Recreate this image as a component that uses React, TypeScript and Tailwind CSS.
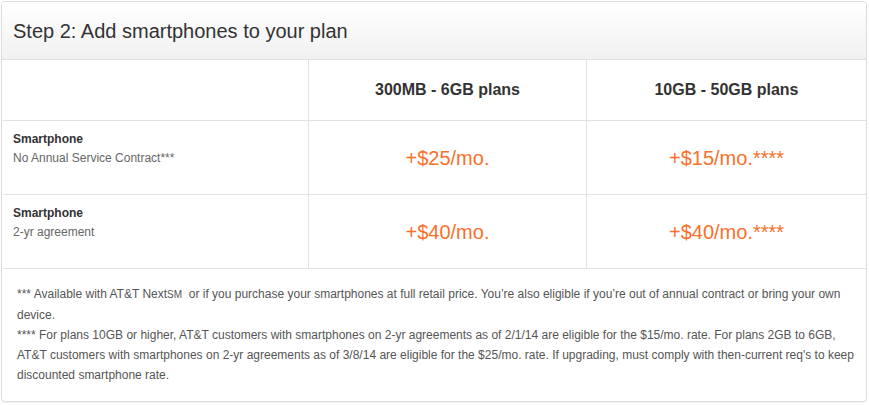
const rows = [
  { title: "Smartphone", sub: "No Annual Service Contract***", a: "+$25/mo.", b: "+$15/mo.****" },
  { title: "Smartphone", sub: "2-yr agreement", a: "+$40/mo.", b: "+$40/mo.****" },
];

export default function App() {
  return (
    <div className="bg-white w-[869px] h-[405px] pt-[1px] pl-[1px] font-['Liberation_Sans',Arial,sans-serif]">
      <div className="w-[866px] h-[401px] rounded-[4px] border border-[#dcdcdc] shadow-[0_1px_1px_rgba(0,0,0,0.06)] overflow-hidden flex flex-col">
        <div className="h-[58px] flex items-center pl-[11px] bg-gradient-to-b from-white to-[#f1f1f1] border-b border-[#e0e0e0]">
          <h2 className="text-[20px] text-[#333] leading-none">Step 2: Add smartphones to your plan</h2>
        </div>

        <div className="grid grid-cols-[306px_278px_1fr] ml-[1px] text-[#333]">
          <div className="h-[61px] border-b border-r border-[#e3e3e3]" />
          <div className="h-[61px] flex items-center justify-center border-b border-r border-[#e3e3e3] text-[16px] font-bold">
            300MB - 6GB plans
          </div>
          <div className="h-[61px] flex items-center justify-center border-b border-[#e3e3e3] text-[16px] font-bold">
            10GB - 50GB plans
          </div>

          {rows.map((r, i) => (
            <div key={i} className="contents">
              <div className="h-[74px] border-b border-r border-[#e3e3e3] pl-[10px] pt-[9px] text-[12px] leading-[19px]">
                <div className="font-bold">{r.title}</div>
                <div className="text-[#666]">{r.sub}</div>
              </div>
              <div className="h-[74px] flex items-center justify-center border-b border-r border-[#e3e3e3] text-[20px] text-[#fb6f2a]">
                {r.a}
              </div>
              <div className="h-[74px] flex items-center justify-center border-b border-[#e3e3e3] text-[20px] text-[#fb6f2a]">
                {r.b}
              </div>
            </div>
          ))}
        </div>

        <div className="pl-[15px] pr-[3px] pt-[15px] text-[12px] leading-[20px] text-[#555]">
          <p>
            *** Available with AT&amp;T Next<span className="text-[10px]">SM</span>&nbsp; or if you purchase your
            smartphones at full retail price. You’re also eligible if you’re out of annual contract or bring your own
            device.
          </p>
          <p>
            **** For plans 10GB or higher, AT&amp;T customers with smartphones on 2-yr agreements as of 2/1/14 are
            eligible for the $15/mo. rate. For plans 2GB to 6GB, AT&amp;T customers with smartphones on 2-yr agreements
            as of 3/8/14 are eligible for the $25/mo. rate. If upgrading, must comply with then-current req's to keep
            discounted smartphone rate.
          </p>
        </div>
      </div>
    </div>
  );
}
